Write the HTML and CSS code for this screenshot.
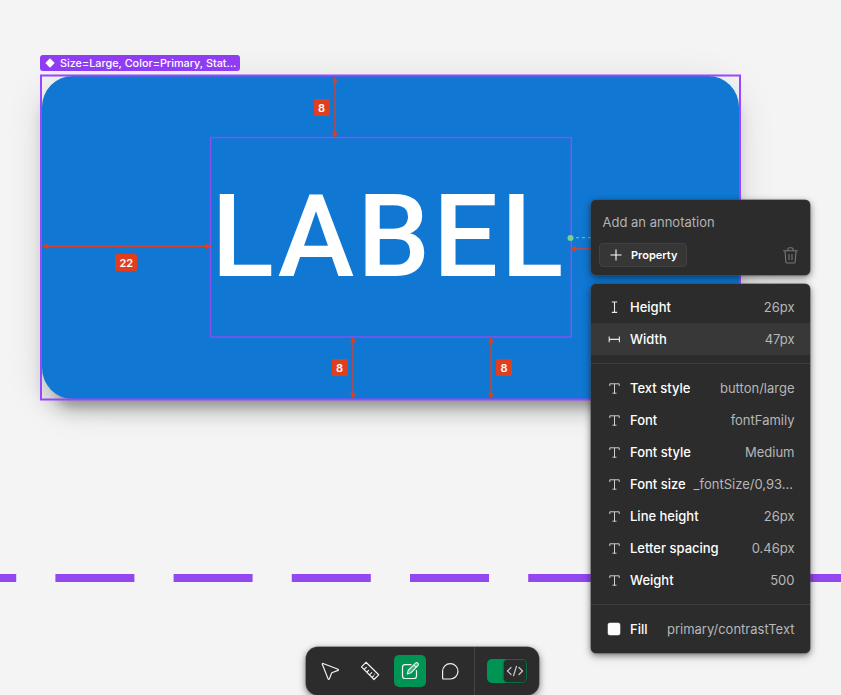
FILE: index.html
```html
<!DOCTYPE html>
<html lang="en">
<head>
<meta charset="utf-8">
<title>Annotate</title>
<link rel="stylesheet" href="styles.css">
</head>
<body>
<main class="canvas">
  <svg class="section-line" width="841" height="8"><path d="M-62.8 4H850" stroke="#9446f0" stroke-width="8" stroke-dasharray="79 39.2"/></svg>
  <div class="frame">
    <div class="button"></div>
    <div class="label">LABEL</div>
  </div>
  <svg class="overlay" width="841" height="695" fill="none">
    <rect x="41" y="75.5" width="699" height="324" stroke="#9747ff" stroke-width="2"/>
    <rect x="210.5" y="137.5" width="360.8" height="199.5" stroke="#8a50f5" stroke-width="1.4"/>
    <g stroke="#d9412b" stroke-width="1.4">
      <path d="M43 246.3H210M335 78V136M353 339V397M491 339V397M572 249H592"/>
    </g>
    <g fill="#e03e1e">
      <path d="M42 246.3l6-3v6zM211.500 246.3l-6-3v6zM335 77l-3 5h6zM335 138.500l-3-6h6zM353 336.500l-3 6h6zM353 399l-3-6h6zM491 336.500l-3 6h6zM491 399l-3-6h6zM570 249l6-3v6z"/>
    </g>
    <path d="M576 237.700H592" stroke="#76d196" stroke-dasharray="3 3"/>
    <circle cx="570.5" cy="238" r="3" fill="#78d393"/>
  </svg>
  <div class="tag">
    <svg width="10" height="10"><path d="M5 .3L9.700 5 5 9.700.3 5z" fill="#fff"/></svg>
    <span>Size=Large, Color=Primary, Stat...</span>
  </div>
  <span class="measure measure-top">8</span>
  <span class="measure measure-left">22</span>
  <span class="measure measure-bottom">8</span>
  <span class="measure measure-bottom-end">8</span>

  <section class="annotation">
    <div class="placeholder">Add an annotation</div>
    <div class="actions">
      <button class="property">
        <svg width="12" height="12" stroke="#fff" stroke-width="1.100"><path d="M6 .5v11M.5 6h11"/></svg>
        <span>Property</span>
      </button>
      <svg class="trash" width="16" height="18" fill="none" stroke="#777" stroke-width="1.100" stroke-linecap="round"><path d="M1.500 4.800h14M5.800 4.500v-1a1.700 1.700 0 0 1 1.700-1.700h2a1.700 1.700 0 0 1 1.700 1.700v1M3 5l.8 10.500A1.500 1.500 0 0 0 5.300 17h6.400a1.500 1.500 0 0 0 1.500-1.500L14 5M7 8.500v5M10 8.500v5"/></svg>
    </div>
  </section>

  <section class="menu">
    <svg class="defs" width="0" height="0"><defs>
      <symbol id="t" viewBox="0 0 12 12"><path d="M1.800 4V1.800h9.400V4M6.500 1.800v9.400M4.500 11.200h4" fill="none" stroke="#cfcfcf" stroke-width="1"/></symbol>
    </defs></svg>
    <div class="row"><svg width="12" height="12" stroke="#e8e8e8" stroke-width="1.100"><path d="M6.500 1v10.400M3.800 1h5.400M3.800 11.400h5.400"/></svg><b>Height</b><span>26px</span></div>
    <div class="row hover"><svg width="12" height="12" stroke="#e8e8e8" stroke-width="1.100"><path d="M1.200 6.400h10.300M1.200 3.600v5.600M11.400 3.600v5.600"/></svg><b>Width</b><span>47px</span></div>
    <hr>
    <div class="row"><svg width="12" height="12"><use href="#t"/></svg><b>Text style</b><span>button/large</span></div>
    <div class="row"><svg width="12" height="12"><use href="#t"/></svg><b>Font</b><span>fontFamily</span></div>
    <div class="row"><svg width="12" height="12"><use href="#t"/></svg><b>Font style</b><span>Medium</span></div>
    <div class="row clipped"><svg width="12" height="12"><use href="#t"/></svg><b>Font size</b><span>_fontSize/0,93...</span></div>
    <div class="row"><svg width="12" height="12"><use href="#t"/></svg><b>Line height</b><span>26px</span></div>
    <div class="row"><svg width="12" height="12"><use href="#t"/></svg><b>Letter spacing</b><span>0.46px</span></div>
    <div class="row"><svg width="12" height="12"><use href="#t"/></svg><b>Weight</b><span>500</span></div>
    <hr>
    <div class="row"><i class="swatch"></i><b>Fill</b><span>primary/contrastText</span></div>
  </section>

  <nav class="toolbar">
    <div class="tool"><svg width="20" height="20"><path d="M3.100 2.500l15 5.700c.6.200.6 1 0 1.200l-6.300 2.300-2.500 6.200c-.2.600-1 .6-1.200 0L2.300 3.300c-.2-.5.300-1 .8-.8z"/></svg></div>
    <div class="tool"><svg width="20" height="20"><path d="M1.500 5.800L6 1.300 18.700 13.800 14 18.500zM4.300 8.300l2-2M7 11l1.600-1.600M9.700 13.700l2-2M12.300 16.200l1.300-1.300M14.700 13v.1"/></svg></div>
    <div class="tool active"><svg width="20" height="20"><path d="M11 3.600H5A2.500 2.500 0 0 0 2.500 6v9A2.500 2.500 0 0 0 5 17.500h9a2.500 2.500 0 0 0 2.500-2.500V9.500"/><path class="pencil" d="M7.300 13l1-3.800 7.200-7.100a1.500 1.500 0 0 1 2.200 0l.2.200a1.500 1.500 0 0 1 0 2.200L11 11.800zM13.700 3.900l2.500 2.500"/></svg></div>
    <div class="tool"><svg width="20" height="20"><path d="M10.300 2.600a7.700 7.700 0 0 1 0 15.400H3.500a.9.900 0 0 1-.9-.9v-6.800a7.700 7.700 0 0 1 7.700-7.700z"/></svg></div>
    <div class="mode">
      <div class="switch"><div class="knob"><svg width="18" height="12"><path d="M5 2.500L1.500 6 5 9.500M13 2.500L16.500 6 13 9.500M10.500 1.300l-3 9.400"/></svg></div></div>
    </div>
  </nav>
</main>
</body>
</html>
```
FILE: styles.css
```css
* { box-sizing: border-box; }
body { margin: 0; }
.canvas {
  position: relative;
  width: 841px;
  height: 695px;
  overflow: hidden;
  background: #f4f4f4;
  font-family: Inter, "Liberation Sans", sans-serif;
}
.section-line { position: absolute; left: 0; top: 574px; }
.frame { position: absolute; left: 42px; top: 76px; width: 697px; height: 323px; }
.button {
  height: 323px;
  border-radius: 31px;
  background: #1077d3;
  box-shadow: 0 23px 8px -15px rgba(0,0,0,.2), 0 15px 15px 0 rgba(0,0,0,.14), 0 8px 38px 0 rgba(0,0,0,.12);
}
.label {
  position: absolute;
  left: 169.500px;
  top: 61px;
  width: 361px;
  height: 200px;
  color: #fff;
  font: 500 115.300px/200px Roboto, sans-serif;
  letter-spacing: 2.950px;
  white-space: nowrap;
}
.overlay { position: absolute; left: 0; top: 0; }
.tag {
  position: absolute;
  left: 40px;
  top: 55px;
  width: 200px;
  height: 16px;
  display: flex;
  align-items: center;
  gap: 5px;
  padding-left: 5px;
  border-radius: 3px;
  background: #8f3cf3;
  color: #fff;
  font-size: 10.850px;
  font-weight: 500;
  white-space: nowrap;
}
.tag svg { flex: none; }
.measure {
  position: absolute;
  width: 16px;
  height: 17px;
  border-radius: 2px;
  background: #e03e1e;
  color: #fff;
  font-size: 11px;
  font-weight: 600;
  line-height: 18px;
  text-align: center;
}
.measure-top { left: 313.500px; top: 98.500px; }
.measure-left { left: 115.300px; top: 253.500px; width: 22px; }
.measure-bottom { left: 331.500px; top: 358.500px; }
.measure-bottom-end { left: 496px; top: 358.500px; }

.annotation, .menu, .toolbar {
  position: absolute;
  background: #2c2c2c;
  box-shadow: 0 0 0 .500px rgba(80,80,80,.9), 0 2px 6px rgba(0,0,0,.5), 0 4px 12px rgba(0,0,0,.12);
}
.annotation {
  left: 591px;
  top: 200px;
  width: 219px;
  height: 75px;
  border-radius: 5px;
  padding: 12px 12px 7px 7.500px;
}
.placeholder { padding-left: 4px; height: 31px; line-height: 20px; font-size: 13px; color: #b3b3b3; }
.actions { display: flex; justify-content: space-between; align-items: center; }
.property {
  display: flex;
  align-items: center;
  gap: 9px;
  width: 88px;
  height: 24px;
  padding: 0 0 0 10.500px;
  border: 1px solid #414141;
  border-radius: 4px;
  background: #363636;
  color: #fff;
  font: 600 11px Inter, sans-serif;
}
.menu { left: 591px; top: 284px; width: 219px; border-radius: 5px; padding: 7px 0 8px; }
.defs { position: absolute; }
.row { display: flex; align-items: center; height: 32px; padding: 0 15.500px 0 17px; font-size: 13px; white-space: nowrap; }
.row svg { flex: none; }
.row b { margin-left: 10px; font-weight: 500; color: #fff; }
.row span { margin-left: auto; color: #b7b7b7; }
.clipped { padding-right: 17px; }
.hover { background: #383838; }
.swatch { width: 12px; height: 12px; border-radius: 2px; background: #fff; box-shadow: 0 0 0 .500px #999; }
.menu hr { height: 1px; margin: 8px 0; border: 0; background: #3e3e3e; }

.toolbar {
  left: 306px;
  top: 647px;
  width: 233px;
  height: 48px;
  display: flex;
  align-items: center;
  gap: 8px;
  padding-left: 8px;
  border-radius: 12px;
}
.tool { width: 32px; height: 32px; display: grid; place-items: center; border-radius: 5px; }
.tool svg, .knob svg { fill: none; stroke: #f2f2f2; stroke-width: 1.200; stroke-linejoin: round; stroke-linecap: round; }
.active { background: #009454; }
.tool .pencil { fill: #55ae85; stroke: #d9efe4; }
.mode { height: 48px; display: flex; align-items: center; padding-left: 12px; border-left: 1px solid #454545; }
.switch { width: 40px; height: 24px; display: flex; justify-content: flex-end; border-radius: 5px; background: #009454; padding: 1px; }
.knob { width: 22px; height: 22px; display: grid; place-items: center; border-radius: 4px; background: #2c2c2c; box-shadow: 0 0 2px #111; }
.knob svg { stroke: #c9c9c9; }
```
